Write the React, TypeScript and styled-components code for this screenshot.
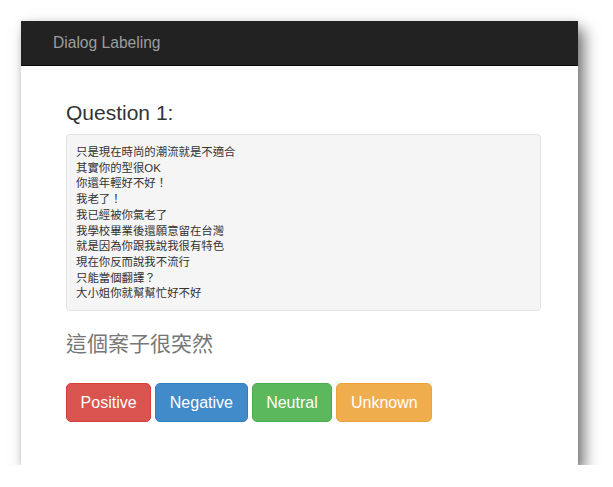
import React from "react";
import styled, { createGlobalStyle } from "styled-components";

const GlobalStyle = createGlobalStyle`
  html, body {
    margin: 0;
    padding: 0;
    background: #ffffff;
  }
  body {
    font-family: "Liberation Sans", Arial, "Noto Sans CJK TC", sans-serif;
  }
`;

const Page = styled.div`
  padding: 21px 0 0 21px;
`;

const Window = styled.div`
  width: 557px;
  height: 444px;
  background: #ffffff;
  box-shadow: 6px 8px 14px rgba(0, 0, 0, 0.55), 0 0 6px rgba(0, 0, 0, 0.08);
  display: flex;
  flex-direction: column;
`;

const Navbar = styled.div`
  height: 44px;
  background: #222222;
  border-bottom: 1px solid #080808;
  display: flex;
  align-items: center;
  padding-left: 32px;
`;

const Brand = styled.span`
  font-family: "Liberation Sans", Arial, sans-serif;
  font-size: 15.6px;
  color: #9d9d9d;
`;

const Content = styled.div`
  padding: 35px 37px 0 45px;
  display: flex;
  flex-direction: column;
`;

const Title = styled.h3`
  margin: 0 0 10px;
  font-family: "Liberation Sans", Arial, sans-serif;
  font-weight: normal;
  font-size: 21px;
  line-height: 23px;
  color: #333333;
`;

const Well = styled.div`
  background: #f5f5f5;
  border: 1px solid #e3e3e3;
  border-radius: 4px;
  padding: 10px 9px 8px;
  font-family: "Liberation Sans", Arial, "Noto Sans CJK TC", sans-serif;
  font-size: 11.4px;
  line-height: 15.7px;
  color: #333333;
`;

const Line = styled.div``;

const Subtitle = styled.h3`
  margin: 21px 0 0;
  font-family: "Liberation Sans", Arial, "Noto Sans CJK TC", sans-serif;
  font-weight: normal;
  font-size: 21px;
  line-height: 23px;
  color: #777777;
`;

const ButtonRow = styled.div`
  display: flex;
  gap: 4px;
  margin-top: 28px;
`;

const Button = styled.button<{ $bg: string; $border: string }>`
  font-family: "Liberation Sans", Arial, sans-serif;
  font-size: 16px;
  line-height: 21px;
  padding: 8px 13.6px;
  color: #ffffff;
  background: ${(p) => p.$bg};
  border: 1px solid ${(p) => p.$border};
  border-radius: 5px;
  cursor: pointer;
`;

const lines = [
  "只是現在時尚的潮流就是不適合",
  "其實你的型很OK",
  "你還年輕好不好！",
  "我老了！",
  "我已經被你氣老了",
  "我學校畢業後還願意留在台灣",
  "就是因為你跟我說我很有特色",
  "現在你反而說我不流行",
  "只能當個翻譯？",
  "大小姐你就幫幫忙好不好",
];

const buttons = [
  { label: "Positive", bg: "#d9534f", border: "#d43f3a" },
  { label: "Negative", bg: "#428bca", border: "#357ebd" },
  { label: "Neutral", bg: "#5cb85c", border: "#4cae4c" },
  { label: "Unknown", bg: "#f0ad4e", border: "#eea236" },
];

export default function App() {
  return (
    <>
      <GlobalStyle />
      <Page>
        <Window>
          <Navbar>
            <Brand>Dialog Labeling</Brand>
          </Navbar>
          <Content>
            <Title>Question 1:</Title>
            <Well>
              {lines.map((l) => (
                <Line key={l}>{l}</Line>
              ))}
            </Well>
            <Subtitle>這個案子很突然</Subtitle>
            <ButtonRow>
              {buttons.map((b) => (
                <Button key={b.label} $bg={b.bg} $border={b.border}>
                  {b.label}
                </Button>
              ))}
            </ButtonRow>
          </Content>
        </Window>
      </Page>
    </>
  );
}
